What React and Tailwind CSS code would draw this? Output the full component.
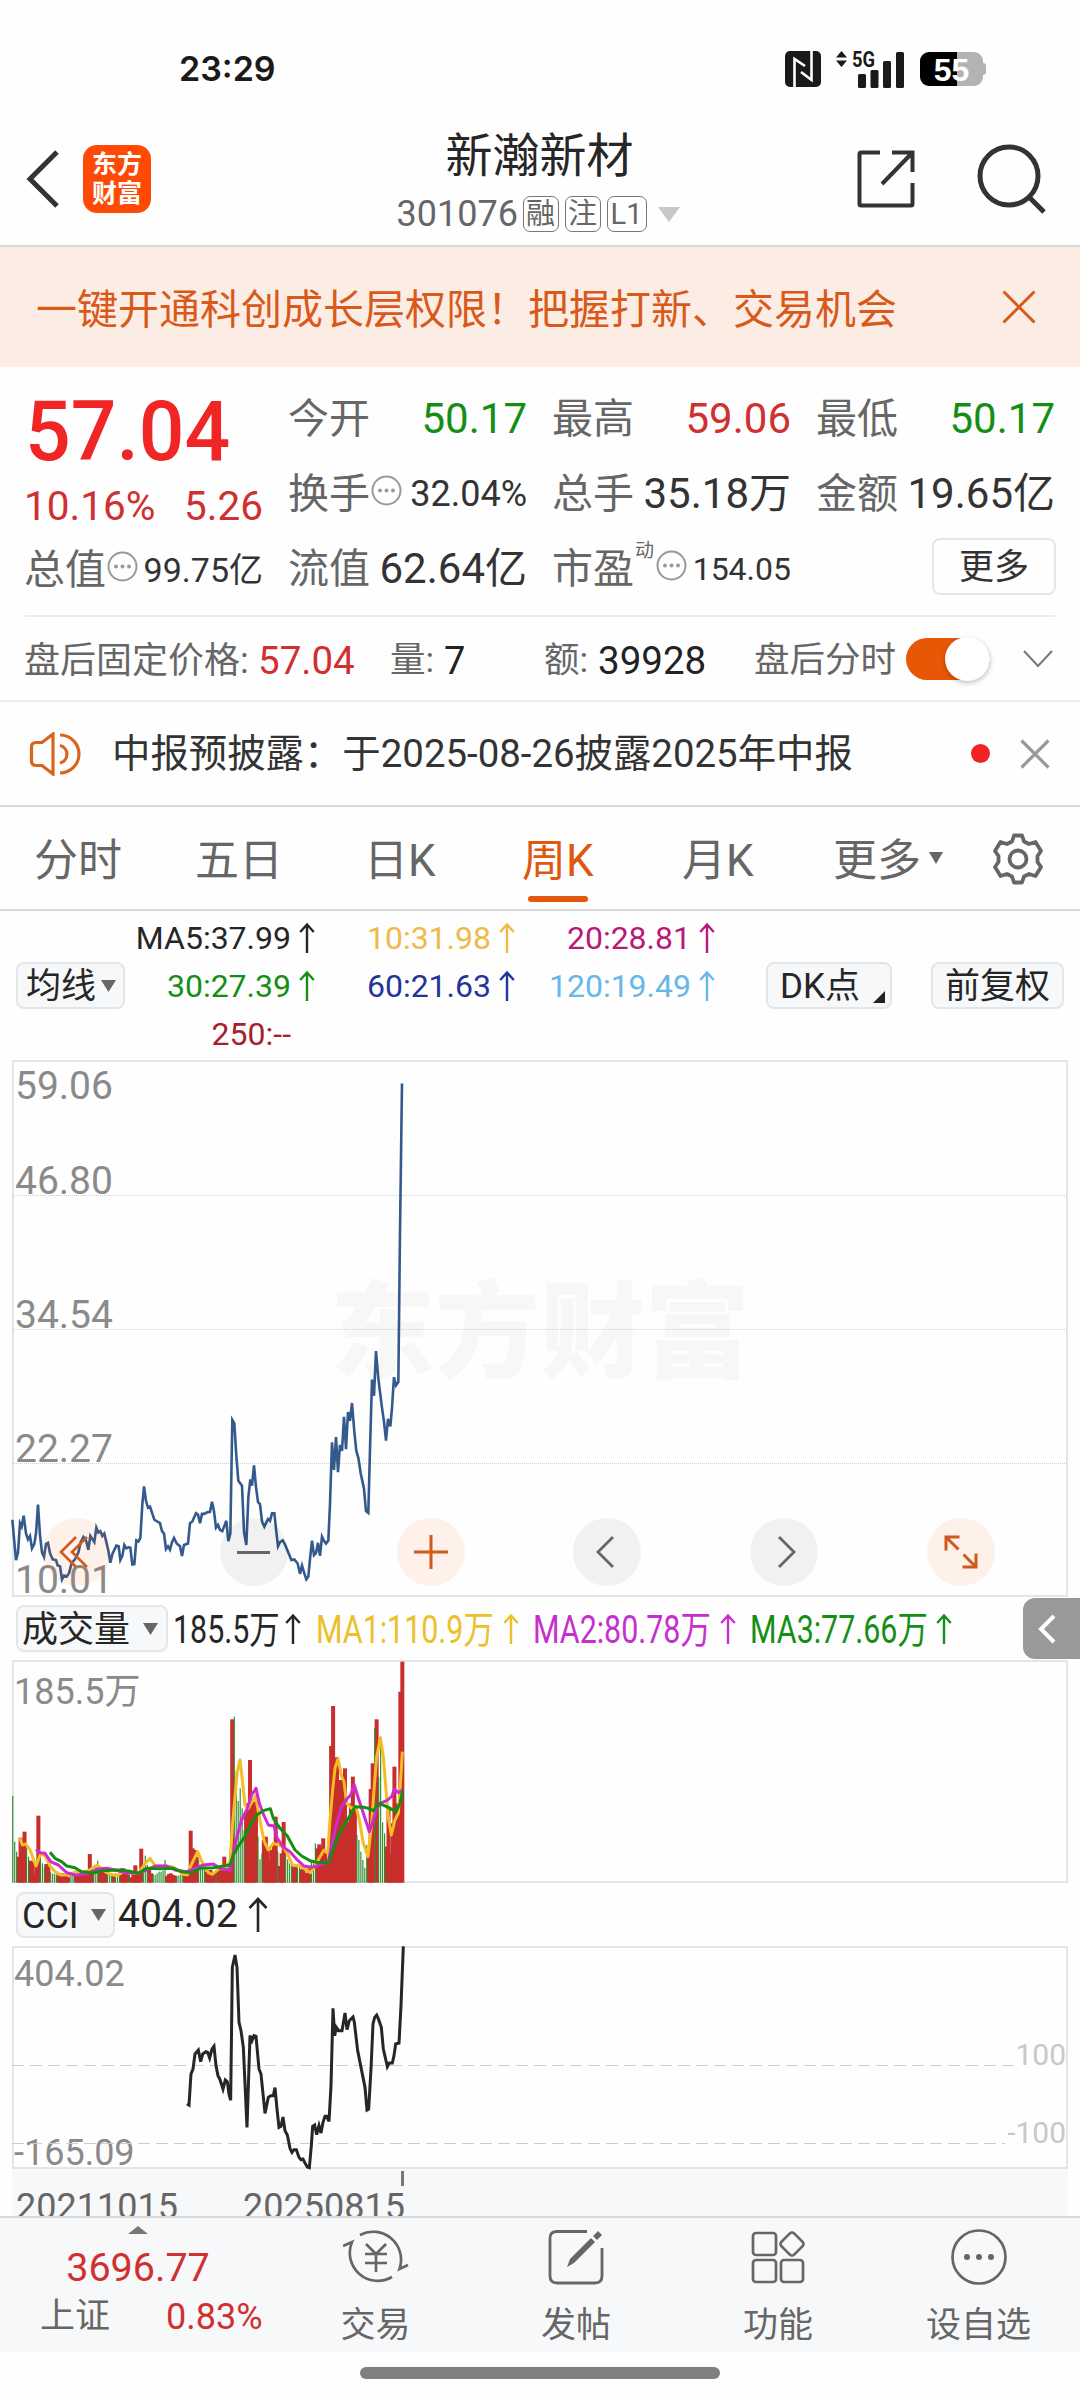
import React from "react";

const FONT = "font-['Roboto','Noto_Sans_CJK_SC',sans-serif]";

function Arrow({ className = "" }) {
  return (
    <svg className={`shrink-0 ${className}`} width="16" height="32" viewBox="0 0 16 32" fill="none" stroke="currentColor" strokeWidth="2.4">
      <path d="M8 31V3M1.2 10L8 2.5L14.8 10" />
    </svg>
  );
}

function Tri({ w = 15, h = 12, className = "text-[#666]" }) {
  return (
    <svg className={`shrink-0 ${className}`} width={w} height={h} viewBox="0 0 10 8" preserveAspectRatio="none" fill="currentColor">
      <path d="M0 0H10L5 8Z" />
    </svg>
  );
}

function More() {
  return (
    <svg className="shrink-0" width="31" height="31" viewBox="0 0 31 31" fill="none">
      <circle cx="15.5" cy="15.5" r="14" stroke="#999" strokeWidth="2" />
      <g fill="#999">
        <circle cx="9" cy="15.5" r="2" />
        <circle cx="15.5" cy="15.5" r="2" />
        <circle cx="22" cy="15.5" r="2" />
      </g>
    </svg>
  );
}

function StatusBar() {
  return (
    <div className="flex h-[110px] items-center pt-7 pl-[179px]">
      <div className="w-[606px] font-['Inter',sans-serif] text-[34px] leading-none font-semibold text-[#1a1a1a]">23:29</div>
      <svg width="36" height="36" viewBox="0 0 36 36">
        <rect width="36" height="36" rx="5" fill="#1a1a1a" />
        <path d="M9.500 36V8L20 15M26.500 0V29L16 21" fill="none" stroke="#fff" strokeWidth="2.600" />
      </svg>
      <div className="ml-[15px] flex h-[37px] w-[69px]">
        <svg className="overflow-visible" width="69" height="37" viewBox="0 0 69 37" fill="#1a1a1a">
          <path d="M0 6.500L5.500 0L11 6.500ZM0 9.500L5.500 16L11 9.500Z" />
          <text x="16" y="16" fontSize="22" fontWeight="700" textLength="23" lengthAdjust="spacingAndGlyphs" fontFamily="Roboto">5G</text>
          <rect x="22" y="23" width="8" height="14" rx="1.500" />
          <rect x="34.500" y="19" width="8" height="18" rx="1.500" />
          <rect x="47" y="10" width="8" height="27" rx="1.500" />
          <rect x="60" y="1" width="8" height="36" rx="1.500" />
        </svg>
      </div>
      <div className="ml-[15px] flex items-center">
        <div className="flex h-[34px] w-[63px] items-center justify-center rounded-[9px] bg-[linear-gradient(90deg,#000_59%,#b3b3b3_59%)] font-['Liberation_Sans'] text-[32px] leading-none font-bold text-white">
          <span className="pt-[2px]">55</span>
        </div>
        <div className="h-3 w-[3px] rounded-r-[3px] bg-[#b3b3b3]" />
      </div>
    </div>
  );
}

function Badge({ children, className = "" }) {
  return (
    <span className={`flex h-9 items-center justify-center rounded-[7px] border-[1.5px] border-[#777] pt-px text-[29px] leading-none ${className}`}>{children}</span>
  );
}

function Header() {
  return (
    <header className="flex h-[137px] items-center border-b-2 border-[#d8d8d8] pt-[3px] pl-[26px]">
      <svg width="34" height="58" viewBox="0 0 34 58" fill="none" stroke="#333" strokeWidth="5">
        <path d="M31 2L4 29L31 56" />
      </svg>
      <div className="ml-[23px] flex h-[68px] w-[68px] flex-col items-center justify-center rounded-[14px] bg-[#ff4a05] text-[25px] leading-[29px] font-bold text-white">
        <span>东方</span>
        <span>财富</span>
      </div>
      <div className="ml-[235px] flex w-[306px] flex-col items-center pl-px">
        <h1 className="text-[47px] leading-[52px] font-normal text-[#262626]">新瀚新材</h1>
        <div className="-mb-[6px] mt-[12px] flex h-10 w-[290px] items-center text-[#666]">
          <span className="w-[128px] pl-[2px] text-[36px] leading-none">301076</span>
          <Badge className="w-9">融</Badge>
          <Badge className="ml-[6px] w-9">注</Badge>
          <Badge className="ml-[6px] w-10">L1</Badge>
          <Tri w={22} h={15} className="ml-[11px] text-[#c8c8c8]" />
        </div>
      </div>
      <svg className="ml-[165px]" width="58" height="58" viewBox="0 0 58 58" fill="none" stroke="#333" strokeWidth="4">
        <path d="M23 2.500H4Q2.500 2.500 2.500 4V54Q2.500 55.500 4 55.500H54Q55.500 55.500 55.500 54V33M35 2.500H55.500V22M55 3L25 34" />
      </svg>
      <svg className="ml-[58px]" width="74" height="74" viewBox="0 0 74 74" fill="none" stroke="#333" strokeWidth="5">
        <circle cx="36" cy="34" r="29" />
        <path d="M56 55L71 70" />
      </svg>
    </header>
  );
}

function Banner() {
  return (
    <div className="flex h-[120px] items-center justify-between bg-[#fcede4] pr-[44px] pl-9 text-[#d9591a]">
      <span className="pt-[6px] text-[41px] leading-none">一键开通科创成长层权限！把握打新、交易机会</span>
      <svg width="34" height="34" viewBox="0 0 34 34" fill="none" stroke="currentColor" strokeWidth="3">
        <path d="M1.500 1.500L32.500 32.500M32.500 1.500L1.500 32.500" />
      </svg>
    </div>
  );
}

function Stat({ label, value, color = "text-[#333]", size = "text-[42px]", info, sup }) {
  return (
    <div className="-ml-px flex h-[75px] items-center pt-[3px] leading-none whitespace-nowrap">
      <span className="text-[41px] text-[#666]">{label}</span>
      {sup && <span className="-mt-[38px] ml-[1px] w-[20px] text-[19px] text-[#666]">{sup}</span>}
      {info && <span className="-mt-[8px] ml-px"><More /></span>}
      <span className={`ml-auto ${size} ${color}`}>{value}</span>
    </div>
  );
}

function Quote() {
  return (
    <section className="mx-[25px] grid h-[250px] grid-cols-4 gap-x-[26px] border-b-2 border-[#ececec] pt-[13px]">
      <div>
        <div className="flex h-[100px] items-center pt-[3px] text-[84px] leading-none font-medium text-[#f02525]">
          <span className="origin-left scale-x-[0.957]">57.04</span>
        </div>
        <div className="-ml-px flex h-[51px] items-center justify-between pt-[2px] text-[40.5px] leading-none text-[#d03030]">
          <span>10.16%</span>
          <span>5.26</span>
        </div>
        <Stat label="总值" info value="99.75亿" size="text-[34px]" />
      </div>
      <div>
        <Stat label="今开" value="50.17" color="text-[#148f14]" />
        <Stat label="换手" info value="32.04%" size="text-[36px]" />
        <Stat label="流值" value="62.64亿" />
      </div>
      <div>
        <Stat label="最高" value="59.06" color="text-[#d03030]" />
        <Stat label="总手" value="35.18万" />
        <Stat label="市盈" sup="动" info value="154.05" size="text-[32px]" />
      </div>
      <div>
        <Stat label="最低" value="50.17" color="text-[#148f14]" />
        <Stat label="金额" value="19.65亿" />
        <div className="-mr-px flex h-[73px] items-center justify-end">
          <button className="h-[57px] w-[124px] rounded-[8px] border-2 border-[#e4e7e9] pt-px text-[35px] leading-none text-[#333]">更多</button>
        </div>
      </div>
    </section>
  );
}

function AfterHours() {
  return (
    <div className="flex h-[85px] items-center border-b-2 border-[#ececec] pl-[24px] text-[35.500px] leading-none whitespace-nowrap text-[#666]">
      <span className="w-[234px] pt-[5px] text-[36px]">盘后固定价格:</span>
      <span className="w-[132px] pt-[5px] text-[38.5px] text-[#d03030]">57.04</span>
      <span className="w-[54px] pt-[5px]">量:</span>
      <span className="w-[100px] pt-[5px] text-[38px] text-[#222]">7</span>
      <span className="w-[54px] pt-[5px]">额:</span>
      <span className="w-[156px] pt-[5px] text-[38.5px] text-[#222]">39928</span>
      <span className="w-[152px] pt-[5px]">盘后分时</span>
      <div className="flex h-[42px] w-[84px] items-center justify-end rounded-full bg-[#e85705]">
        <div className="h-[44px] w-[45px] rounded-full bg-white shadow-[0_2px_5px_rgba(0,0,0,0.25)]" />
      </div>
      <svg className="ml-[33px]" width="30" height="18" viewBox="0 0 30 18" fill="none" stroke="#777" strokeWidth="2">
        <path d="M1 1L15 16L29 1" />
      </svg>
    </div>
  );
}

function Notice() {
  return (
    <div className="flex h-[105px] items-center border-b-2 border-[#d9d9d9] pl-[29px]">
      <svg width="52" height="44" viewBox="0 0 52 44" fill="none" stroke="#d9641c" strokeWidth="3.200">
        <path d="M24 2V42L13 33.500H7Q2.500 33.500 2.500 29V15Q2.500 10.500 7 10.500H13ZM31 3A19 19 0 0 1 31 41M31 13.500A9 9 0 0 1 31 31" />
      </svg>
      <span className="ml-[31px] w-[859px] pt-[2px] text-[38.400px] leading-none text-[#333]">中报预披露：于2025-08-26披露2025年中报</span>
      <div className="h-[19px] w-[19px] rounded-full bg-[#f02424]" />
      <svg className="ml-[30px]" width="30" height="30" viewBox="0 0 30 30" fill="none" stroke="#999" strokeWidth="3.200">
        <path d="M1.500 1.500L28.500 28.500M28.500 1.500L1.500 28.500" />
      </svg>
    </div>
  );
}

function Tabs() {
  return (
    <nav className="flex h-[104px] items-center border-b-2 border-[#d9d9d9] pl-[34px] text-[44px] leading-none whitespace-nowrap text-[#666]">
      <span className="w-[161px] pt-[6px]">分时</span>
      <span className="w-[169px] pt-[6px]">五日</span>
      <span className="w-[158px] pt-[6px]">日K</span>
      <span className="relative flex h-full w-[160px] items-center pt-[6px] text-[#e0570f]">
        周K
        <span className="absolute bottom-[7px] left-[6px] h-[6px] w-[60px] rounded-full bg-[#e4570e]" />
      </span>
      <span className="w-[151px] pt-[6px]">月K</span>
      <span className="w-[96px] pt-[6px]">更多</span>
      <Tri w={14} h={12} />
      <svg className="ml-[49px] mt-px" width="52" height="52" viewBox="0 0 52 52" fill="none" stroke="#666" strokeWidth="3.800" strokeLinejoin="round">
        <path d="M22 2.500H30L32 8.500L37 11L43.500 9L49 18L45.500 23V29L49 34L43.500 43L37 41L32 43.500L30 49.500H22L20 43.500L15 41L8.500 43L3 34L6.500 29V23L3 18L8.500 9L15 11L20 8.500Z" />
        <circle cx="26" cy="26" r="8.500" />
      </svg>
    </nav>
  );
}

function Ma({ text, color, none }) {
  return (
    <div className={`flex h-12 items-center justify-end text-[32px] leading-none whitespace-nowrap ${color}`}>
      <span>{text}</span>
      {none ? <span className="w-[25px]" /> : <Arrow className="mr-px ml-2" />}
    </div>
  );
}

function MaRow() {
  return (
    <div className="flex h-[149px] items-center pl-4">
      <button className="flex h-[47px] w-[109px] items-center justify-between rounded-[8px] border-2 border-[#e3e6e9] bg-[#f7f8fa] pr-[7px] pl-[8px] text-[35px] leading-none whitespace-nowrap text-[#262626]">
        <span className="pt-[2px]">均线</span><Tri />
      </button>
      <div className="grid h-[144px] w-[591px] grid-cols-[191px_200px_200px]">
        <Ma text="MA5:37.99" color="text-[#262626]" />
        <Ma text="10:31.98" color="text-[#f0b94a]" />
        <Ma text="20:28.81" color="text-[#b81a7c]" />
        <Ma text="30:27.39" color="text-[#148f14]" />
        <Ma text="60:21.63" color="text-[#23359a]" />
        <Ma text="120:19.49" color="text-[#69b6ea]" />
        <Ma text="250:--" color="text-[#a8202c]" none />
      </div>
      <button className="ml-[50px] flex h-[47px] w-[126px] items-center justify-between rounded-[8px] border-2 border-[#e3e6e9] bg-[#f7f8fa] pr-[5px] pl-[12px] text-[35px] leading-none whitespace-nowrap text-[#262626]">
        <span className="pt-[2px]">DK点</span>
        <svg className="mt-[22px]" width="12" height="12" viewBox="0 0 12 12" fill="#222"><path d="M12 0V12H0Z" /></svg>
      </button>
      <button className="ml-[39px] h-[47px] w-[133px] rounded-[8px] border-2 border-[#e3e6e9] bg-[#f7f8fa] pt-[2px] text-[35px] leading-none text-[#262626]">前复权</button>
    </div>
  );
}

const PRICE =
  "M37 1335L43 1400L48 1452L54 1430L60 1345L65 1355L71 1323L78 1375L84 1392L90 1382L96 1418L103 1405L108 1375L114 1291L120 1380L126 1430L132 1443L138 1405L144 1402L150 1432L158 1450L168 1452L173 1468L180 1470L186 1508L192 1497L200 1500L207 1490L215 1460L225 1450L235 1430L242 1400L250 1385L258 1395L265 1422L271 1382L283 1400L289 1358L295 1372L301 1368L307 1382L313 1375L319 1400L325 1425L331 1460L337 1435L349 1410L356 1412L361 1452L367 1440L373 1408L379 1418L385 1415L391 1416L397 1465L403 1464L409 1395L415 1398L421 1388L427 1290L432 1238L438 1280L444 1300L450 1297L463 1335L480 1345L486 1368L492 1375L498 1420L504 1412L510 1422L516 1400L522 1388L530 1404L540 1412L546 1440L552 1408L564 1404L570 1345L577 1340L588 1316L594 1320L600 1345L606 1318L613 1318L620 1314L630 1312L636 1283L642 1310L648 1358L654 1350L660 1364L667 1368L679 1338L685 1397L691 1375L697 1045L703 1055L709 1150L715 1222L726 1236L732 1370L739 1408L745 1270L751 1218L756 1236L762 1177L768 1240L774 1283L780 1290L786 1340L793 1355L804 1333L810 1338L816 1316L823 1316L829 1370L834 1412L840 1400L848 1395L854 1405L865 1430L874 1452L883 1450L893 1462L900 1492L906 1468L912 1488L919 1508L925 1500L931 1440L936 1396L942 1438L948 1432L954 1402L960 1440L966 1384L972 1396L978 1404L985 1395L990 1290L996 1110L1002 1190L1008 1095L1014 1197L1020 1118L1026 1135L1032 1036L1038 1130L1044 1022L1050 1048L1056 996L1063 1080L1069 1135L1075 1155L1082 1200L1092 1245L1098 1310L1105 1315L1110 1130L1116 928L1122 975L1128 845L1135 925L1146 1010L1152 1050L1158 1105L1164 1042L1171 1064L1176 1010L1182 921L1188 945L1195 935L1200 500L1206 68";

function PriceChart() {
  const btn = "flex h-[68px] w-[68px] items-center justify-center rounded-full";
  const warm = "bg-[#ff5500]/8 text-[#cf5a1c]";
  const cool = "bg-black/5 text-[#666]";
  return (
    <div className="relative ml-3 h-[537px] w-[1056px] border-2 border-[#e5e5e5]">
      <div className="absolute inset-0 flex items-start justify-center pt-[219px] text-[105px] leading-none font-black text-[#f7f7f7]">东方财富</div>
      <svg className="absolute -top-[3px] -left-[14px]" width="1080" height="540" viewBox="0 0 1080 540" fill="none">
        <path d="M12 136.500H1067M12 270.500H1067M12 404.500H1067" stroke="#d0d0d0" strokeWidth="1" strokeDasharray="1 1" />
      </svg>
      <div className="flex h-full flex-col text-[39px] leading-none text-[#8a8a8a]">
        <span className="mt-[5px] ml-px">59.06</span>
        <span className="mt-[56px] ml-px">46.80</span>
        <span className="mt-[95px] ml-px">34.54</span>
        <span className="mt-[95px] ml-px">22.27</span>
        <span className="mt-[92px] ml-px">10.01</span>
      </div>
      <svg className="absolute -top-[2px] -left-[14px]" width="420" height="540" viewBox="0 0 1260 1568" preserveAspectRatio="none" fill="none">
        <path d={PRICE} stroke="#34598d" strokeWidth="2.600" vectorEffect="non-scaling-stroke" />
      </svg>
      <div className="absolute right-[71px] bottom-[9px] left-[29px] flex justify-between">
        <div className={`${btn} ${warm}`}>
          <svg className="-ml-[6px]" width="30" height="32" viewBox="0 0 30 32" fill="none" stroke="currentColor" strokeWidth="2.600"><path d="M17 1L2 16L17 31M28 1L13 16L28 31" /></svg>
        </div>
        <div className={`${btn} ${cool}`}><div className="h-[3px] w-[33px] bg-current" /></div>
        <div className={`${btn} ${warm}`}>
          <svg width="34" height="34" viewBox="0 0 34 34" fill="none" stroke="currentColor" strokeWidth="3"><path d="M0 17H34M17 0V34" /></svg>
        </div>
        <div className={`${btn} ${cool}`}>
          <svg className="-ml-[2px]" width="20" height="34" viewBox="0 0 20 34" fill="none" stroke="currentColor" strokeWidth="2.800"><path d="M17 2L2 17L17 32" /></svg>
        </div>
        <div className={`${btn} ${cool}`}>
          <svg className="ml-[4px]" width="20" height="34" viewBox="0 0 20 34" fill="none" stroke="currentColor" strokeWidth="2.800"><path d="M3 2L18 17L3 32" /></svg>
        </div>
        <div className={`${btn} ${warm}`}>
          <svg width="34" height="34" viewBox="0 0 34 34" fill="none" stroke="currentColor" strokeWidth="3"><path d="M2 15.500V2H15.500M2 2L14.500 14.500M32 18.500V32H18.500M32 32L19.500 19.500" /></svg>
        </div>
      </div>
    </div>
  );
}

function VolItem({ text, color, w }) {
  return (
    <div className={`flex items-center ${color} ${w}`}>
      <div className="flex-1 pt-[3px]">
        <span className="inline-block origin-left scale-x-[0.8] text-[38px] leading-none whitespace-nowrap">{text}</span>
      </div>
    </div>
  );
}

function VolumeHeader() {
  return (
    <div className="flex h-[63px] items-center pl-4">
      <button className="flex h-[47px] w-[152px] items-center justify-between rounded-[8px] border-2 border-[#e3e6e9] bg-[#f7f8fa] pr-[8px] pl-[4px] text-[36px] leading-none text-[#262626]">
        <span className="pt-[2px]">成交量</span><Tri />
      </button>
      <div className="flex w-[855px] items-center">
        <VolItem text="185.5万" color="text-[#262626]" w="ml-[5px] w-[112px] min-w-0" />
        <Arrow className="text-[#262626]" />
        <VolItem text="MA1:110.9万" color="text-[#ecc02a]" w="ml-[15px] w-[187px] min-w-0" />
        <Arrow className="text-[#ecc02a]" />
        <VolItem text="MA2:80.78万" color="text-[#c62fce]" w="ml-[14px] w-[187px] min-w-0" />
        <Arrow className="text-[#c62fce]" />
        <VolItem text="MA3:77.66万" color="text-[#148f14]" w="ml-[14px] w-[186px] min-w-0" />
        <Arrow className="text-[#148f14]" />
      </div>
      <div className="flex h-[61px] w-[57px] items-center justify-center rounded-l-[12px] bg-[#999]">
        <svg className="mr-[10px]" width="18" height="30" viewBox="0 0 18 30" fill="none" stroke="#fff" strokeWidth="4"><path d="M16 2L3 15L16 28" /></svg>
      </div>
    </div>
  );
}

// Weekly volume bars: direction (r = up, g = down) and the bar's top edge.
const VOLUME =
  "g618 g755 g785 r800 r743 r765 r725 g775 g800 r812 r815 r850 r825 r677 g800 g820 g830 r822 r825 g845 g850 g852 g850 r856 r855 r850 r855 r858 r862 g850 g855 g852 r852 r854 r856 r850 r856 r840 r845 r792 r838 g840 g830 g812 r845 r843 r848 r852 g850 g855 g858 r856 g850 g852 g845 r835 r835 r845 r842 g850 r862 r855 r826 r850 r845 r776 g825 g797 g825 r840 r850 g852 g855 g850 g845 g845 g842 g810 r858 r852 r850 r855 r857 g858 g856 g854 g852 r858 r856 r850 r722 r775 r780 r800 g810 g835 g830 g840 r845 r842 r840 r850 r848 g845 r840 r840 r830 r800 r835 r840 r830 r388 g380 g543 g633 g595 g655 g722 r665 r640 r510 r640 r635 r637 g740 g808 g790 r750 r740 r780 r815 r780 r760 r680 g785 r828 r790 r696 g790 g808 g820 g822 r830 r830 g835 g832 r838 r835 r850 r848 r835 g810 g820 g760 r775 r763 r775 r745 r790 r810 r825 r468 r348 r550 r502 r600 r570 r575 r535 r700 r695 r640 r560 r650 g735 g750 g785 g810 g833 g765 r800 r597 r520 g414 r388 g560 g440 g697 g730 r770 r650 r790 r700 r530 r640 r650 r305 r215"
    .split(" ")
    .map((s) => [s[0], Number(s.slice(1))]);

const STEP = (1207 - 38) / (VOLUME.length - 1);

const VMA1 = "M60 745L67 765L78 762L90 780L108 828L120 795L134 795L150 828L165 845L182 855L205 855L228 845L260 845L290 826L310 838L325 850L350 858L370 845L390 850L415 850L430 828L450 805L466 828L500 828L522 832L545 850L562 855L572 828L593 785L610 825L625 848L637 853L655 838L675 835L690 815L698 700L705 620L712 545L720 510L727 570L735 645L745 655L767 617L774 660L785 718L793 755L805 780L820 760L835 765L848 770L862 790L878 825L900 828L915 838L932 848L945 828L960 800L972 780L983 790L990 690L998 600L1005 535L1014 507L1025 560L1032 575L1040 640L1055 655L1068 650L1078 690L1090 760L1104 800L1115 700L1122 600L1130 500L1141 443L1150 500L1158 600L1166 690L1174 735L1185 690L1195 670L1200 600L1207 485";
const VMA2 = "M108 778L120 788L135 790L152 815L175 825L200 848L225 855L260 852L290 838L320 835L345 840L375 848L410 850L440 840L465 828L500 828L525 840L560 845L585 835L610 825L640 822L665 838L690 840L700 790L712 735L725 690L740 660L755 615L768 595L778 640L790 672L805 705L822 708L832 745L850 772L870 785L890 808L912 828L935 832L960 825L985 815L995 765L1010 700L1025 650L1040 628L1052 615L1063 585L1075 625L1090 670L1108 725L1118 695L1130 655L1145 638L1160 632L1175 620L1183 597L1195 608L1208 600";
const VMA3 = "M150 787L165 805L185 815L200 828L225 833L245 845L280 848L310 842L350 840L385 843L415 850L440 835L480 836L520 835L545 845L575 848L600 835L640 833L690 825L700 795L715 768L735 740L752 702L770 675L790 662L811 656L820 685L840 715L862 738L885 780L905 798L930 812L955 818L985 818L1000 775L1020 725L1045 685L1065 650L1090 652L1105 655L1120 662L1138 640L1160 650L1188 665L1200 640L1208 602";

function VolumeChart() {
  return (
    <div className="relative ml-3 h-[223px] w-[1056px] border-2 border-[#e5e5e5]">
      <svg className="absolute -top-[72px] -left-[14px]" width="420" height="300" viewBox="0 0 1260 900" fill="none">
        {VOLUME.map(([dir, top], i) => {
          const x = 38 + i * STEP;
          return dir === "r" ? (
            <rect key={i} x={x - 6} y={top} width="12" height={878 - top} fill="#c72e2c" />
          ) : null;
        })}
        {VOLUME.map(([dir, top], i) => {
          const x = 38 + i * STEP;
          return dir === "g" ? (
            <rect key={i} x={x - 1.5} y={top} width="3.4" height={878 - top} fill="#2b8a2b" />
          ) : null;
        })}
        <g strokeWidth="9" strokeLinejoin="round">
          <path d={VMA1} stroke="#f5bd22" />
          <path d={VMA2} stroke="#d02bd0" />
          <path d={VMA3} stroke="#148f14" />
        </g>
      </svg>
      <div className="pt-[12px] text-[36px] leading-none text-[#8a8a8a]">185.5万</div>
    </div>
  );
}

const CCI =
  "M561 674L567 678L573 585L579 570L585 525L595 513L602 548L608 525L618 518L623 520L629 537L636 510L642 502L648 560L654 590L660 602L669 630L676 603L682 608L687 645L692 664L697 265L705 228L711 265L717 430L723 455L730 505L741 745L750 470L756 485L762 470L768 472L777 570L783 585L795 703L805 655L812 650L820 650L825 626L831 690L837 745L843 742L849 714L855 755L862 768L870 808L876 820L882 812L889 812L897 835L903 842L909 840L915 852L922 864L928 866L934 800L938 742L944 738L950 767L957 740L963 762L969 730L975 712L980 712L987 727L993 620L999 388L1004 470L1009 445L1016 455L1026 455L1035 402L1041 452L1048 425L1059 414L1063 430L1073 515L1083 565L1095 625L1101 693L1106 690L1113 570L1119 435L1124 415L1130 408L1136 422L1144 445L1150 510L1158 545L1162 563L1168 552L1177 552L1182 530L1187 495L1197 492L1203 380L1210 202";

function CciPanel() {
  return (
    <>
      <div className="flex h-[63px] items-center pl-4">
        <button className="flex h-[46px] w-[99px] items-center justify-between rounded-[8px] border-2 border-[#e3e6e9] bg-[#f7f8fa] pr-[7px] pl-[4px] text-[36px] leading-none text-[#262626]">
          <span className="pt-[2px]">CCI</span><Tri />
        </button>
        <span className="ml-[3px] text-[39px] leading-none text-[#262626]">404.02</span>
        <svg className="ml-[10px]" width="20" height="35" viewBox="0 0 20 35" fill="none" stroke="#262626" strokeWidth="2.600"><path d="M10 35V2M1.500 11L10 2L18.500 11" /></svg>
      </div>
      <div className="relative ml-3 h-[223px] w-[1056px] border-2 border-[#e5e5e5]">
        <svg className="absolute -top-[68px] -left-[14px]" width="1080" height="300" viewBox="0 0 1080 300" fill="none">
          <path d="M12 185.500H1014M12 263.500H1005" stroke="#ccc" strokeWidth="1.200" strokeDasharray="12 6" />
        </svg>
        <svg className="absolute -top-[69px] -left-[14px]" width="420" height="300" viewBox="0 0 1260 900" fill="none">
          <path d={CCI} stroke="#262626" strokeWidth="9" />
        </svg>
        <div className="flex h-full justify-between text-[36px] leading-none">
          <div className="flex flex-col justify-between pt-[8px] text-[#8a8a8a]">
            <span>404.02</span>
            <span className="-mb-[4px]">-165.09</span>
          </div>
          <div className="flex flex-col items-end gap-[48px] pt-[92px] text-[30px] text-[#c8c8c8]">
            <span>100</span>
            <span>-100</span>
          </div>
        </div>
      </div>
      <div className="mr-3 ml-3 flex h-[47px] overflow-hidden bg-[#f7f8fa] text-[36px] leading-none text-[#666]">
        <span className="w-[227px] pt-[20px] pl-[4px]">20211015</span>
        <span className="w-[163px] pt-[20px] pl-[4px]">20250815</span>
        <span className="-ml-px mt-[2px] h-[15px] w-[3px] bg-[#777]" />
      </div>
    </>
  );
}

function NavItem({ label, w, children }) {
  return (
    <div className={`flex flex-col items-center ${w}`}>
      <div className="flex h-[68px] items-center pt-[9px]">{children}</div>
      <span className="mt-[22px] text-[35px] leading-none text-[#666]">{label}</span>
    </div>
  );
}

function BottomNav() {
  return (
    <footer className="flex h-[136px] border-t-2 border-[#d9d9dc] bg-[#f7f8fa]">
      <div className="flex w-[276px] flex-col items-center">
        <svg className="mt-[8px]" width="20" height="8" viewBox="0 0 20 8" fill="#777"><path d="M0 8L10 0L20 8Z" /></svg>
        <span className="mt-[14px] text-[39.5px] leading-none text-[#d03030]">3696.77</span>
        <div className="mt-[11px] flex w-full items-center pl-[40px] leading-none">
          <span className="text-[35px] text-[#666]">上证</span>
          <span className="ml-[56px] text-[36px] text-[#d03030]">0.83%</span>
        </div>
      </div>
      <NavItem label="交易" w="w-[199px]">
        <svg width="66" height="60" viewBox="0 0 66 60" fill="none" stroke="#666" strokeWidth="2.700">
          <path d="M17 8A28 28 0 0 1 56.500 42L65 38M49 50A28 28 0 0 1 9 15L0 19M23 17L33 27L43 17M22 27H44M22 36H44M33 27V45" />
        </svg>
      </NavItem>
      <NavItem label="发帖" w="w-[202px]">
        <svg width="56" height="56" viewBox="0 0 56 56" fill="none" stroke="#666" strokeWidth="2.800">
          <path d="M39 2.500H9Q2 2.500 2 9V47Q2 54 9 54H47Q54 54 54 47V19" />
          <path d="M19 38L22 30L43 9L47 13L26 34ZM45 7L50 2L54 6L49 11Z" fill="#666" stroke="none" />
        </svg>
      </NavItem>
      <NavItem label="功能" w="w-[202px]">
        <svg width="54" height="54" viewBox="0 0 54 54" fill="none" stroke="#666" strokeWidth="2.700">
          <rect x="2" y="3" width="23" height="22" rx="3" />
          <rect x="2" y="30" width="23" height="22" rx="3" />
          <rect x="30" y="30" width="22" height="22" rx="3" />
          <rect x="32" y="5" width="18" height="18" rx="3" transform="rotate(45 41 14)" />
        </svg>
      </NavItem>
      <NavItem label="设自选" w="w-[199px]">
        <svg width="58" height="58" viewBox="0 0 58 58" fill="none">
          <circle cx="29" cy="29" r="26.500" stroke="#666" strokeWidth="2.700" />
          <g fill="#666"><circle cx="17" cy="29" r="3" /><circle cx="29" cy="29" r="3" /><circle cx="41" cy="29" r="3" /></g>
        </svg>
      </NavItem>
    </footer>
  );
}

export default function App() {
  return (
    <div className={`flex h-[2400px] w-[1080px] flex-col overflow-hidden bg-[#fefefe] ${FONT}`}>
      <StatusBar />
      <Header />
      <Banner />
      <Quote />
      <AfterHours />
      <Notice />
      <Tabs />
      <MaRow />
      <PriceChart />
      <VolumeHeader />
      <VolumeChart />
      <CciPanel />
      <BottomNav />
      <div className="mx-auto mt-[15px] h-3 w-[360px] rounded-full bg-[#808080]" />
    </div>
  );
}
